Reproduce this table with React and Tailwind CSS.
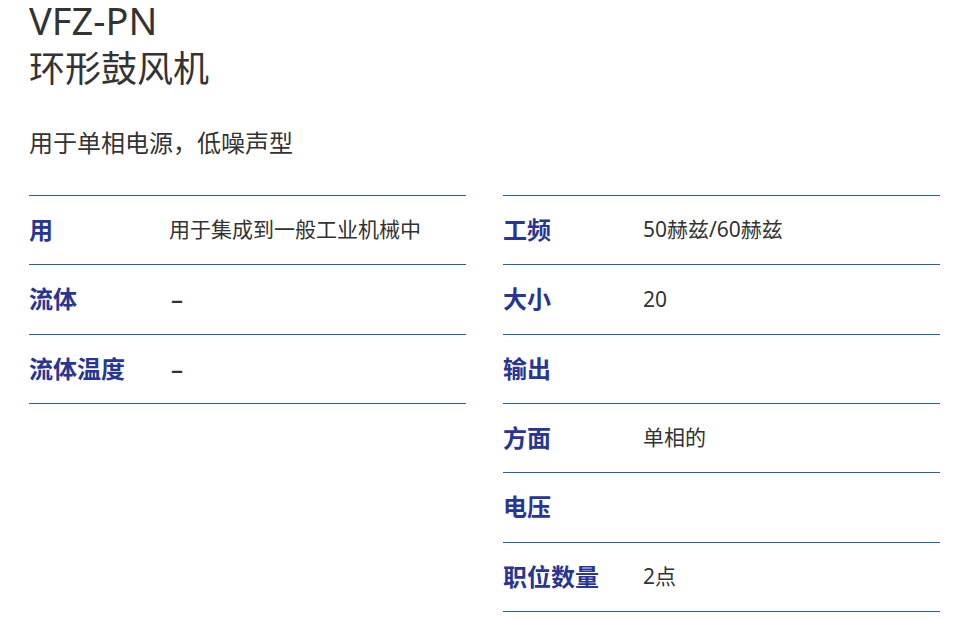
import React from "react";

const leftRows = [
  { label: "用", value: "用于集成到一般工业机械中" },
  { label: "流体", value: "–", dash: true },
  { label: "流体温度", value: "–", dash: true },
];

const rightRows = [
  { label: "工频", value: "50赫兹/60赫兹" },
  { label: "大小", value: "20" },
  { label: "输出", value: "" },
  { label: "方面", value: "单相的" },
  { label: "电压", value: "" },
  { label: "职位数量", value: "2点" },
];

function SpecTable({ rows }) {
  return (
    <div className="border-t border-[#1f5fbf]">
      {rows.map((row) => (
        <div
          key={row.label}
          className="flex h-[69.33px] items-center border-b border-[#1f5fbf]"
        >
          <div className="w-[140px] shrink-0 text-[24px] font-bold text-[#283593]">
            {row.label}
          </div>
          <div
            className={
              row.dash
                ? "pl-[2px] text-[24px] font-semibold text-[#333]"
                : "text-[21px] text-[#333]"
            }
          >
            {row.value}
          </div>
        </div>
      ))}
    </div>
  );
}

export default function App() {
  return (
    <div
      className="min-h-screen bg-white pl-[29px] pr-[26px] pt-[2px] text-[#333]"
      style={{ fontFamily: '"Noto Sans", "Noto Sans CJK SC", sans-serif' }}
    >
      <h1 className="font-normal">
        <span className="block text-[38px] leading-[36px]">VFZ-PN</span>
        <span className="mt-[6px] block text-[36px] leading-[50px]">环形鼓风机</span>
      </h1>
      <p className="mt-[34px] text-[24px] leading-[30px]">用于单相电源，低噪声型</p>
      <div className="mt-[37px] grid grid-cols-2 gap-x-[37px] items-start">
        <SpecTable rows={leftRows} />
        <SpecTable rows={rightRows} />
      </div>
    </div>
  );
}
